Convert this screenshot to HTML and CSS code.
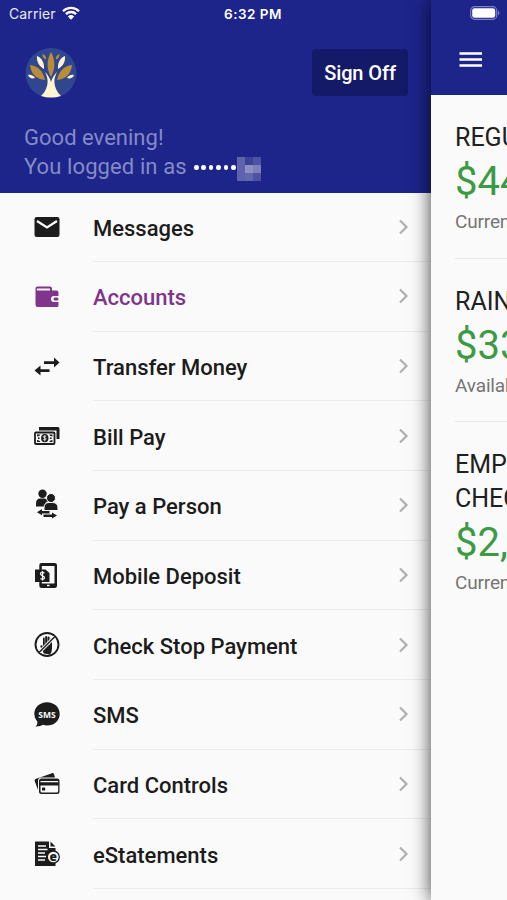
FILE: index.html
```html
<!DOCTYPE html>
<html lang="en">
<head>
<meta charset="utf-8">
<title>Mobile Banking</title>
<link rel="stylesheet" href="styles.css">
</head>
<body>
<div class="screen">
  <aside class="drawer">
    <header class="profile">
      <div class="status">
        <span class="carrier">Carrier</span>
        <svg class="wifi" viewBox="0 0 18 14"><path d="M1 5.2a11.4 11.4 0 0 1 16 0M3.9 8.1a7.3 7.3 0 0 1 10.2 0" fill="none" stroke="#fff" stroke-width="2.3"/><path d="M9 13.7 5.8 10.4a4.7 4.7 0 0 1 6.4 0z" fill="#fff"/></svg>
        <span class="time">6:32 PM</span>
      </div>
      <div class="brand">
        <svg class="logo" viewBox="0 0 52 50">
          <ellipse cx="26" cy="25" rx="25.5" ry="25" fill="#30478f"/>
          <g fill="#b98d35"><path d="M26 4c4.500 8 4.500 17 0 25-4.500-8-4.500-17 0-25zM5 17c8 1 13 6 15 15C11 31 6 26 5 17zM47 17c-8 1-13 6-15 15 9-1 14-6 15-15zM17.500 6c3 1 4 3 3.500 5.500-3-1-3.500-3-3.500-5.500zM34.500 6c-3 1-4 3-3.500 5.500 3-1 3.500-3 3.500-5.500z"/></g>
          <g fill="#fff3d0"><path d="M12 8c5 2 7.500 7 7 13-5-3-7.500-7-7-13zM40 8c-5 2-7.500 7-7 13 5-3 7.500-7 7-13zM3 27c3-1 6 1 7 3-3 1-6 0-7-3zM49 27c-3-1-6 1-7 3 3 1 6 0 7-3zM20 24c3 3 5 6 6 10 1-4 3-7 6-10-3 6-3 10-2 14s3 7 6 10q-10 3-20 0c3-3 5-6 6-10s1-8-2-14z"/></g>
        </svg>
        <button class="signoff">Sign Off</button>
      </div>
      <div class="greeting">Good evening!</div>
      <div class="login"><span class="as">You logged in as</span><span class="dots"><i></i><i></i><i></i><i></i><i></i><i></i></span><span class="mask"><i></i><i></i><i></i><i></i><i></i><i></i><i></i><i></i><i></i></span></div>
    </header>
    <nav class="menu">
      <a class="item"><svg class="icon" viewBox="0 0 26 26"><rect x=".5" y="3" width="25" height="20" rx="2.2"/><path d="m3 7 10 6.5L23 7" fill="none" stroke="#fafafa" stroke-width="2.3"/></svg><span class="label">Messages<svg class="chevron" viewBox="0 0 10 16"><path d="m1.500 1.500 6.500 6.500-6.500 6.500"/></svg></span></a>
      <a class="item active"><svg class="icon" viewBox="0 0 26 26"><path d="M3.500 2.500H16q2 0 2 2v2h4.500q2 0 2 2V12H20a3 3 0 0 0 0 6h4.500v3.500q0 1.500-2 1.500h-19Q1.500 23 1.500 20.500v-16q0-2 2-2zM3.700 4.500a1 1 0 0 0 0 2H16v-2z" fill-rule="evenodd"/><rect x="19.500" y="13.500" width="5" height="3" rx="1.500"/></svg><span class="label">Accounts<svg class="chevron" viewBox="0 0 10 16"><path d="m1.500 1.500 6.500 6.500-6.500 6.500"/></svg></span></a>
      <a class="item"><svg class="icon" viewBox="0 0 26 26"><path d="M10 7.200h10V3.500l5.500 5-5.500 5V9.900H10zM15.500 15.200h-9v-3.700l-6 5 6 5v-3.600h9z"/></svg><span class="label">Transfer Money<svg class="chevron" viewBox="0 0 10 16"><path d="m1.500 1.500 6.500 6.500-6.500 6.500"/></svg></span></a>
      <a class="item"><svg class="icon" viewBox="0 0 26 26"><path d="M5 4h19q1.500 0 1.500 1.500v10.500h-3V7.500H5z"/><rect x="1" y="9.500" width="19.500" height="11.500" rx="1" fill="none" stroke="#1c1c1c" stroke-width="1.800"/><path d="M3 11.500h3.500Q5.500 13.500 3 13.500zM3 19h3.500Q5.500 17 3 17zM18.500 11.500H15q1 2 3.500 2zM18.500 19H15q1-2 3.500-2z"/><circle cx="4.800" cy="15.200" r=".9"/><circle cx="16.800" cy="15.200" r=".9"/><ellipse cx="10.800" cy="15.200" rx="3.700" ry="4.100"/><path d="M12.200 13.300q-3-1-3 .4c0 1.500 3 .8 3 2.300q0 1.500-3 .6M10.700 12.300v6" fill="none" stroke="#fafafa" stroke-width=".8"/></svg><span class="label">Bill Pay<svg class="chevron" viewBox="0 0 10 16"><path d="m1.500 1.500 6.500 6.500-6.500 6.500"/></svg></span></a>
      <a class="item"><svg class="icon tall" viewBox="0 0 26 30"><circle cx="8.500" cy="4.800" r="4.200"/><path d="M2 17.500V14.500q0-5 4.500-5h4q3 0 4 2.500-4 1-4 5.500z"/><g stroke="#fafafa" stroke-width="1"><circle cx="17" cy="9" r="4.500"/><path d="M10 21.500V19q0-5.500 5-5.500h3.500q5.500 0 5.500 5.500v2.500z"/></g><path d="M8 21v-1l-5 3.200L8 26.300v-1.800h7.500V22H8zM18 23.500v2H9.500V28H18v1.500l5-3z"/></svg><span class="label">Pay a Person<svg class="chevron" viewBox="0 0 10 16"><path d="m1.500 1.500 6.500 6.500-6.500 6.500"/></svg></span></a>
      <a class="item"><svg class="icon" viewBox="0 0 26 26"><path d="M7.500 0h13.300q2.200 0 2.200 2.200v20.600q0 2.200-2.200 2.200H7.500q-2.200 0-2.200-2.200V2.200Q5.300 0 7.500 0zM7.800 3v17.500h12.700V3z" fill-rule="evenodd"/><path d="M1 6.500h10.500L15.500 10v9H1z"/><path d="m12 6 4 4" stroke="#fafafa" stroke-width=".8"/><path d="M10.500 10q-4-1.500-4 .8c0 2.500 4 1.600 4 4q0 2.200-4 .8M8.500 8v9.500" fill="none" stroke="#fafafa" stroke-width="1.200"/><path d="M13 22.500h2.500" stroke="#fafafa" stroke-width="1.500"/></svg><span class="label">Mobile Deposit<svg class="chevron" viewBox="0 0 10 16"><path d="m1.500 1.500 6.500 6.500-6.500 6.500"/></svg></span></a>
      <a class="item"><svg class="icon" viewBox="0 0 26 26"><circle cx="13" cy="12.500" r="11.500" fill="none" stroke="#1c1c1c" stroke-width="1.900"/><path d="M10 21.500q-1.500-2-3.500-6.500-.5-1.500.7-1.800T9 14.500V6.500q0-1 .9-1t.9 1v5h.4V5q0-1 1-1t1 1v6.500h.4v-6q0-1 1-1t1 1V13h.4V7.500q0-1 1-1t1 1v9q0 4-2 6z"/><path d="M20.500 5 5.500 20" stroke="#fafafa" stroke-width="3.400"/><path d="M21 4.500 5 20.500" stroke="#1c1c1c" stroke-width="1.500"/></svg><span class="label">Check Stop Payment<svg class="chevron" viewBox="0 0 10 16"><path d="m1.500 1.500 6.500 6.500-6.500 6.500"/></svg></span></a>
      <a class="item"><svg class="icon" viewBox="0 0 26 26"><path d="M13 .3c7.200 0 12.700 5 12.700 11.700S20.200 23.500 13 23.500q-2 0-4-.7-3 2-7.500 1.700 2-1.500 2-4.500Q.3 16.500.3 12C.3 5.300 5.800.3 13 .3z"/><text class="sms" x="13" y="15.600" text-anchor="middle">SMS</text></svg><span class="label">SMS<svg class="chevron" viewBox="0 0 10 16"><path d="m1.500 1.500 6.500 6.500-6.500 6.500"/></svg></span></a>
      <a class="item"><svg class="icon" viewBox="0 0 26 26"><path d="M1.500 8 18 2.200q1.500-.5 2 1l1 3.300H7.500q-3.500 0-3.500 3.500v9L.7 10q-.5-1.500.8-2z"/><path d="M7.500 7.500H23q2.500 0 2.500 2.500v10.500q0 2.500-2.500 2.500H7.500Q5 23 5 20.500V10q0-2.500 2.500-2.500zM6.500 10v1.200h17.700V10zM6.500 14.500V20q0 1.500 1.500 1.500h14.700q1.500 0 1.500-1.500v-5.500z" fill-rule="evenodd"/><rect x="8" y="16.500" width="3.200" height="3" rx=".5"/></svg><span class="label">Card Controls<svg class="chevron" viewBox="0 0 10 16"><path d="m1.500 1.500 6.500 6.500-6.500 6.500"/></svg></span></a>
      <a class="item"><svg class="icon" viewBox="0 0 26 26"><path d="M1 .5h14V7h6.500v18H1zM16.500.5 21.500 5.500h-5z"/><path d="M4 5h8M4 8.500h9.500M4 12h7M4 15.500h8M4 19h7" stroke="#fafafa" stroke-width="1.300"/><circle cx="19.300" cy="16" r="6" fill="#fafafa" stroke="#1c1c1c" stroke-width="1.300"/><text class="e" x="19.300" y="19.700" text-anchor="middle">e</text></svg><span class="label">eStatements<svg class="chevron" viewBox="0 0 10 16"><path d="m1.500 1.500 6.500 6.500-6.500 6.500"/></svg></span></a>
    </nav>
  </aside>
  <main class="content">
    <header class="topbar">
      <svg class="battery" viewBox="0 0 30 14"><rect x=".7" y=".7" width="26" height="12.600" rx="3.800" fill="none" stroke="#7c80c4" stroke-width="1.200"/><rect x="2.200" y="2.200" width="23" height="9.600" rx="2.300" fill="#fff"/><path d="M28 4.500q3 2.500 0 5z" fill="#7c80c4"/></svg>
      <svg class="burger" viewBox="0 0 24 16"><path d="M.5 1.500h22.500M.5 7.500h22.500M.5 13.500h22.500" stroke="#fff" stroke-width="2.300"/></svg>
    </header>
    <section class="account"><div class="name">REGULAR</div><div class="amount">$44</div><div class="kind">Current</div></section>
    <section class="account"><div class="name">RAINY</div><div class="amount">$33</div><div class="kind">Available</div></section>
    <section class="account"><div class="name">EMPLOYEE</div><div class="name">CHECKING</div><div class="amount">$2,</div><div class="kind">Current</div></section>
  </main>
</div>
</body>
</html>
```

FILE: styles.css
```css
* { box-sizing: border-box; }
body { margin: 0; font-family: Roboto, sans-serif; background: #fafafa; }
.screen { display: flex; width: 507px; height: 900px; overflow: hidden; }
.drawer { width: 431px; flex: none; color: #1c1c1c; }
.profile { height: 192.5px; background: #1d248a; color: #858bc6; font-size: 22px; }
.status { display: flex; align-items: center; height: 27px; padding-left: 9px; color: #e9eaf6; font-family: Inter, sans-serif; font-size: 14px; }
.carrier { width: 48px; letter-spacing: .1px; }
.wifi { width: 18px; height: 14px; margin: -1px 0 0 5px; }
.time { margin-left: 144px; font-size: 13.5px; font-weight: 600; letter-spacing: .5px; color: #fff; white-space: nowrap; }
.brand { display: flex; justify-content: space-between; align-items: flex-start; height: 96px; padding: 21px 23px 0 25px; }
.logo { width: 52px; height: 50px; }
.signoff { width: 96px; height: 47px; margin-top: 1px; padding: 1px 0 0; border: 0; border-radius: 4px; background: #151a68; color: #fff; font: 500 20px Roboto, sans-serif; letter-spacing: -.1px; }
.greeting, .login { height: 29.500px; line-height: 30px; padding-left: 24px; letter-spacing: .02px; white-space: nowrap; }
.login { display: flex; align-items: center; }
.as { width: 163px; letter-spacing: .1px; }
.dots { display: flex; gap: 2.800px; margin-left: 7px; }
.dots i { width: 4.600px; height: 4.600px; border-radius: 50%; background: #fff; }
.mask { display: grid; grid-template-columns: repeat(3, 8px); grid-template-rows: repeat(3, 8px); margin: 3px 0 0 1px; }
.mask i { background: #4d52a2; }
.mask i:nth-child(2) { background: #3d4299; }
.mask i:nth-child(3n+1) { background: #5e63ac; }
.mask i:nth-child(5) { background: #8c90c5; }
.mask i:nth-child(6) { background: #7c80bb; }
.mask i:nth-child(8) { background: #6267ae; }
.item { display: flex; align-items: center; height: 69.650px; padding-left: 34px; font-size: 22px; font-weight: 500; }
.icon { width: 26px; height: 26px; flex: none; fill: #1c1c1c; margin-right: 33px; }
.tall { height: 30px; margin-top: -3px; }
.active { color: #7f358c; }
.active .icon { fill: #7f358c; }
.label { flex: 1; display: flex; align-items: center; justify-content: space-between; height: 100%; padding: 3px 22px 0 0; border-bottom: 1px solid #ebebeb; letter-spacing: 0; }
.chevron { width: 11px; height: 16px; margin-top: -3px; fill: none; stroke: #b0b0b0; stroke-width: 2.200; }
.sms { font: 700 8.500px "Open Sans", sans-serif; fill: #fafafa; }
.e { font: 900 12px "Open Sans", sans-serif; fill: #1c1c1c; }
.content { width: 76px; flex: none; overflow: hidden; background: #fafafa; box-shadow: 0 0 18px 0 rgba(0, 0, 0, .75); }
.topbar { height: 95px; background: #1d248a; }
.battery { display: block; width: 30px; height: 14px; margin-left: 39px; position: relative; top: 6px; }
.burger { display: block; width: 24px; height: 16px; margin: 38px 0 0 28px; }
.account { margin-left: 24px; padding: 26px 0 21px; border-bottom: 1px solid #e8e8e8; height: 163.700px; white-space: nowrap; }
.account:last-child { border: 0; }
.name { height: 34px; line-height: 34px; font-size: 25px; color: #202020; }
.amount { height: 52px; line-height: 54px; font-size: 40px; color: #3c9b42; }
.kind { height: 30px; line-height: 30px; font-size: 19px; letter-spacing: -.15px; color: #757575; }
```
